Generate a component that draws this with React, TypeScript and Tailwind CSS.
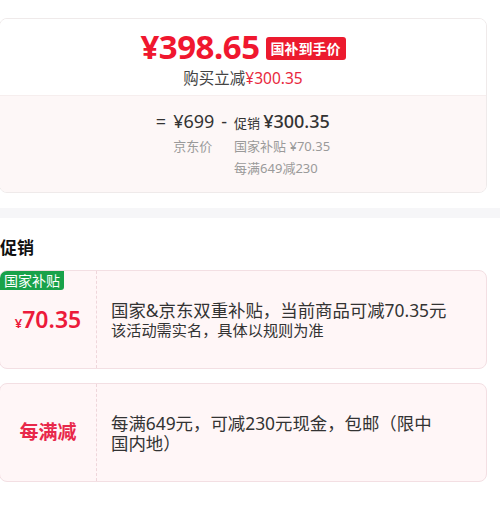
const font = {
  fontFamily: '"Noto Sans", "Noto Sans CJK SC", sans-serif',
};

function PriceCard() {
  return (
    <div className="ml-[-1px] w-[488px] rounded-lg border border-[#efeaea] overflow-hidden">
      <div className="h-[76px] bg-white flex flex-col items-center pt-[10px]">
        <div className="flex items-center gap-[6px]">
          <span className="text-[33px] leading-[36px] font-bold text-[#f0172f] tracking-[-0.5px]">
            ¥398.65
          </span>
          <span className="bg-[#ec1a2e] text-white text-[14px] leading-[23px] font-bold px-[5px] rounded-[3px] mt-[2px]">
            国补到手价
          </span>
        </div>
        <div className="text-[15.5px] leading-[20px] text-[#444] mt-[3px]">
          购买立减<span className="text-[#e8283d]">¥300.35</span>
        </div>
      </div>
      <div className="h-[97px] border-t border-[#f6eeee] bg-[#fdf7f7] flex justify-center pt-[13px]">
        <div className="grid grid-cols-[auto_auto_auto_auto] gap-x-[7px] content-start text-[#333]">
          <span className="text-[18px] leading-[24px]">=</span>
          <span className="text-[18px] leading-[24px]">¥699</span>
          <span className="text-[18px] leading-[24px]">-</span>
          <span className="flex items-baseline gap-[3px]">
            <span className="text-[13px]">促销</span>
            <span className="text-[18px] leading-[24px] font-medium">¥300.35</span>
          </span>

          <span></span>
          <span className="text-[13px] leading-[20px] text-[#9a9a9a] mt-[2px]">京东价</span>
          <span></span>
          <span className="text-[13px] leading-[20px] text-[#9a9a9a] mt-[2px]">
            国家补贴 ¥70.35
          </span>

          <span></span>
          <span></span>
          <span></span>
          <span className="text-[13px] leading-[20px] text-[#9a9a9a] mt-[2px]">
            每满649减230
          </span>
        </div>
      </div>
    </div>
  );
}

function PromoCard({
  left,
  tag,
  children,
}: {
  left: React.ReactNode;
  tag?: string;
  children: React.ReactNode;
}) {
  return (
    <div className="relative ml-[-1px] w-[488px] h-[99px] rounded-lg border border-[#f3dfe3] bg-[#fff6f7] flex overflow-hidden">
      {tag && (
        <span className="absolute left-0 top-0 bg-[#19a24a] text-white text-[14px] leading-[19px] px-[4px] rounded-br-[3px]">
          {tag}
        </span>
      )}
      <div className="w-[97px] shrink-0 flex items-center justify-center border-r border-dashed border-[#efd6db]">
        {left}
      </div>
      <div className="flex-1 flex flex-col justify-center pl-[14px] text-[#333] whitespace-nowrap">
        {children}
      </div>
    </div>
  );
}

export default function App() {
  return (
    <div className="w-[500px] h-[506px] bg-white overflow-hidden" style={font}>
      <div className="pt-[18px]">
        <PriceCard />
      </div>
      <div className="mt-[15px] h-[10px] bg-[#f6f6f8]" />
      <div className="mt-[18px] text-[17px] leading-[24px] font-bold text-[#111]">促销</div>
      <div className="mt-[10px] flex flex-col gap-[14px]">
        <PromoCard
          tag="国家补贴"
          left={
            <span className="text-[#ec1a3a] font-semibold flex items-baseline mt-[1px]">
              <span className="text-[13px]">¥</span>
              <span className="text-[23px] leading-[26px]">70.35</span>
            </span>
          }
        >
          <div className="text-[17.4px] leading-[20px]">国家&京东双重补贴，当前商品可减70.35元</div>
          <div className="text-[15.2px] leading-[20px]">该活动需实名，具体以规则为准</div>
        </PromoCard>
        <PromoCard
          left={<span className="text-[#e8284a] text-[19px] font-bold">每满减</span>}
        >
          <div className="text-[17.4px] leading-[20px]">每满649元，可减230元现金，包邮（限中</div>
          <div className="text-[17.4px] leading-[20px]">国内地）</div>
        </PromoCard>
      </div>
    </div>
  );
}
